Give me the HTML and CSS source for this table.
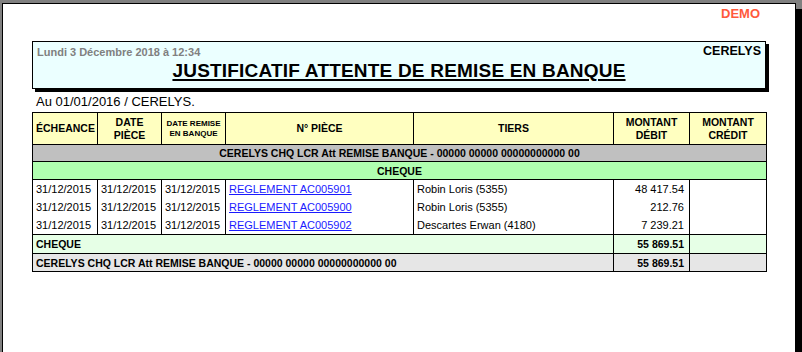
FILE: index.html
```html
<!DOCTYPE html>
<html lang="fr">
<head>
<meta charset="utf-8">
<title>Justificatif attente de remise en banque</title>
<link rel="stylesheet" href="styles.css">
</head>
<body>
<div class="page">
  <div class="demo">DEMO</div>
  <div class="head-box">
    <div class="head-top">
      <span class="head-date">Lundi 3 Décembre 2018 à 12:34</span>
      <span class="head-company">CERELYS</span>
    </div>
    <h1 class="head-title">JUSTIFICATIF ATTENTE DE REMISE EN BANQUE</h1>
  </div>
  <div class="subtitle">Au 01/01/2016 / CERELYS.</div>
  <table class="report">
    <colgroup>
      <col class="c1"><col class="c2"><col class="c3"><col class="c4"><col class="c5"><col class="c6"><col class="c7">
    </colgroup>
    <thead>
      <tr class="hdr">
        <th>ÉCHEANCE</th>
        <th>DATE<br>PIÈCE</th>
        <th class="small">DATE REMISE<br>EN BANQUE</th>
        <th>N° PIÈCE</th>
        <th>TIERS</th>
        <th>MONTANT<br>DÉBIT</th>
        <th>MONTANT<br>CRÉDIT</th>
      </tr>
    </thead>
    <tbody>
      <tr class="grp"><td colspan="7">CERELYS CHQ LCR Att REMISE BANQUE - 00000 00000 00000000000 00</td></tr>
      <tr class="sub"><td colspan="7">CHEQUE</td></tr>
      <tr class="row first">
        <td>31/12/2015</td><td>31/12/2015</td><td>31/12/2015</td>
        <td><a href="#">REGLEMENT AC005901</a></td><td>Robin Loris (5355)</td><td class="num">48 417.54</td><td></td>
      </tr>
      <tr class="row">
        <td>31/12/2015</td><td>31/12/2015</td><td>31/12/2015</td>
        <td><a href="#">REGLEMENT AC005900</a></td><td>Robin Loris (5355)</td><td class="num">212.76</td><td></td>
      </tr>
      <tr class="row">
        <td>31/12/2015</td><td>31/12/2015</td><td>31/12/2015</td>
        <td><a href="#">REGLEMENT AC005902</a></td><td>Descartes Erwan (4180)</td><td class="num">7 239.21</td><td></td>
      </tr>
      <tr class="subtot"><td colspan="5">CHEQUE</td><td class="num">55 869.51</td><td></td></tr>
      <tr class="tot"><td colspan="5">CERELYS CHQ LCR Att REMISE BANQUE - 00000 00000 00000000000 00</td><td class="num">55 869.51</td><td></td></tr>
    </tbody>
  </table>
</div>
</body>
</html>
```
FILE: styles.css
```css
html, body {
  margin: 0;
  padding: 0;
  height: 100%;
  overflow: hidden;
}
body {
  background: #808080;
  font-family: "Liberation Sans", Arial, sans-serif;
  color: #000;
  padding-top: 3px;
  padding-left: 2px;
  box-sizing: border-box;
}
.page {
  width: 794px;
  height: 420px;
  box-sizing: border-box;
  background: #fff;
  border: 1px solid #000;
  box-shadow: 6px 6px 0 #000;
  padding: 2px 29px 0 29px;
}
.demo {
  text-align: right;
  color: #ff5a3c;
  font-weight: bold;
  font-size: 13px;
  line-height: 15px;
  padding-right: 6px;
}
.head-box {
  margin-top: 20px;
  width: 734px;
  height: 48px;
  box-sizing: border-box;
  background: #ebffff;
  border: 1px solid #000;
  box-shadow: 3px 3px 0 #000;
  padding: 2px 4px 0 4px;
}
.head-top {
  display: flex;
  justify-content: space-between;
  align-items: flex-start;
}
.head-date {
  color: #808080;
  font-weight: bold;
  font-size: 11px;
  line-height: 13px;
  margin-top: 2px;
}
.head-company {
  font-weight: bold;
  font-size: 12.5px;
  line-height: 14px;
}
.head-title {
  margin: 1px 0 0 0;
  text-align: center;
  font-size: 19px;
  line-height: 22px;
  letter-spacing: 0.2px;
  font-weight: bold;
  text-decoration: underline;
  text-decoration-thickness: 2px;
  text-underline-offset: 2px;
}
.subtitle {
  margin-top: 5px;
  font-size: 13px;
  line-height: 15px;
  padding-left: 4px;
}
.report {
  margin-top: 3px;
  width: 734px;
  border-collapse: collapse;
  table-layout: fixed;
  font-size: 11px;
}
.c1 { width: 65px; }
.c2 { width: 64px; }
.c3 { width: 64px; }
.c4 { width: 188px; }
.c5 { width: 200px; }
.c6 { width: 76px; }
.c7 { width: 77px; }
.report th, .report td {
  border: 1px solid #000;
  padding: 0 3px;
  white-space: nowrap;
  overflow: hidden;
}
.hdr th {
  background: #ffffc0;
  height: 31px;
  font-weight: bold;
  font-size: 10.5px;
  line-height: 13px;
  text-align: center;
  vertical-align: middle;
}
.hdr th.small {
  font-size: 8px;
  line-height: 10px;
}
.grp td {
  background: #c0c0c0;
  font-weight: bold;
  font-size: 10.5px;
  text-align: center;
  height: 16px;
  line-height: 14px;
}
.sub td {
  background: #b0ffb0;
  font-weight: bold;
  font-size: 10.5px;
  text-align: center;
  height: 17px;
  line-height: 14px;
}
.row td {
  border-top: none;
  border-bottom: none;
  height: 18px;
  line-height: 14px;
}
.row.first td {
  border-top: 1px solid #000;
}
.row td a {
  color: #1a1aff;
  text-decoration: underline;
}
.num {
  text-align: right;
}
.report td.num {
  padding-right: 5px;
}
.subtot td {
  background: #e6ffe6;
  font-weight: bold;
  font-size: 10.5px;
  height: 18px;
  line-height: 14px;
}
.tot td {
  background: #e6e6e6;
  font-weight: bold;
  font-size: 10.5px;
  height: 17px;
  line-height: 14px;
}
```
